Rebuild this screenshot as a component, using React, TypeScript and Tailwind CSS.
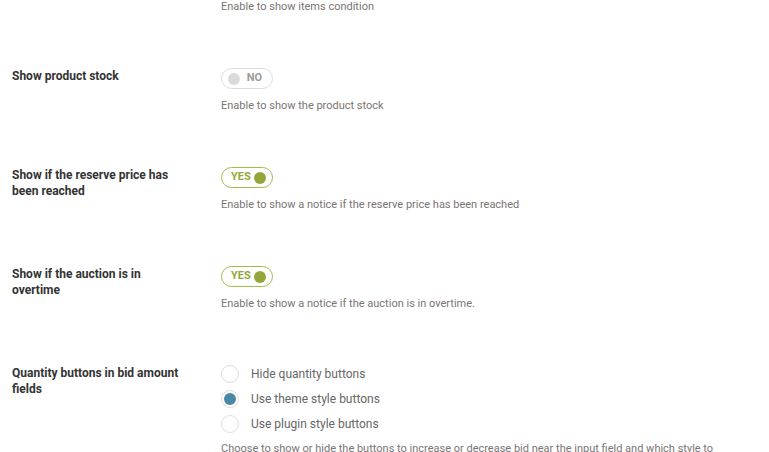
import { useState } from "react";

type Row = { label: string; on: boolean; description: string };

const TOGGLE_ROWS: Row[] = [
  { label: "Show product stock", on: false, description: "Enable to show the product stock" },
  {
    label: "Show if the reserve price has been reached",
    on: true,
    description: "Enable to show a notice if the reserve price has been reached",
  },
  {
    label: "Show if the auction is in overtime",
    on: true,
    description: "Enable to show a notice if the auction is in overtime.",
  },
];

const QTY_OPTIONS = ["Hide quantity buttons", "Use theme style buttons", "Use plugin style buttons"];

function Toggle({ on, onClick }: { on: boolean; onClick: () => void }) {
  return (
    <button
      type="button"
      onClick={onClick}
      className={`flex h-[21px] w-[52px] items-center justify-between rounded-full border bg-white px-[6px] ${
        on ? "border-[#a4bb4a]" : "border-[#dcdcdc]"
      }`}
    >
      {on ? (
        <>
          <span className="ml-[3px] text-[11px] font-bold text-[#94a63a]">YES</span>
          <span className="h-[12px] w-[12px] rounded-full bg-[#94a63a]" />
        </>
      ) : (
        <>
          <span className="h-[12px] w-[12px] rounded-full bg-[#dadada]" />
          <span className="mr-[4px] text-[11px] font-bold text-[#9a9a9a]">NO</span>
        </>
      )}
    </button>
  );
}

export default function App() {
  const [toggles, setToggles] = useState(TOGGLE_ROWS.map((r) => r.on));
  const [qty, setQty] = useState(1);

  return (
    <div className="h-[452px] w-[769px] overflow-hidden bg-white font-['Roboto','Liberation_Sans',sans-serif]">
      <div className="pl-3">
        {/* tail of the previous option */}
        <div className="ml-[209px] mt-[-1px] text-[11px] leading-[16px] text-[#7a7475]">
          Enable to show items condition
        </div>

        {TOGGLE_ROWS.map((row, i) => (
          <div key={row.label} className="mt-[53px] flex">
            <div className="w-[174px] text-[12px] font-bold leading-[16px] text-[#333]">{row.label}</div>
            <div className="ml-[35px]">
              <Toggle
                on={toggles[i]}
                onClick={() => setToggles(toggles.map((t, j) => (j === i ? !t : t)))}
              />
              <p className="mt-[9px] text-[11px] leading-[16px] text-[#7a7475]">{row.description}</p>
            </div>
          </div>
        ))}

        <div className="mt-[53px] flex">
          <div className="w-[174px] text-[12px] font-bold leading-[16px] text-[#333]">
            Quantity buttons in bid amount fields
          </div>
          <div className="ml-[35px] max-w-[500px]">
            <div className="flex flex-col gap-[7px]">
              {QTY_OPTIONS.map((opt, i) => (
                <label key={opt} className="flex h-[18px] cursor-pointer items-center gap-[12px]">
                  <span
                    onClick={() => setQty(i)}
                    className="flex h-[18px] w-[18px] items-center justify-center rounded-full border border-[#dedede] bg-white"
                  >
                    {qty === i && <span className="h-[12px] w-[12px] rounded-full bg-[#4a88a6]" />}
                  </span>
                  <span className="text-[12px] text-[#666]">{opt}</span>
                </label>
              ))}
            </div>
            <p className="mt-[8px] text-[11px] leading-[16px] text-[#7a7475]">
              Choose to show or hide the buttons to increase or decrease bid near the input field and which style to
              use.
            </p>
          </div>
        </div>
      </div>
    </div>
  );
}
